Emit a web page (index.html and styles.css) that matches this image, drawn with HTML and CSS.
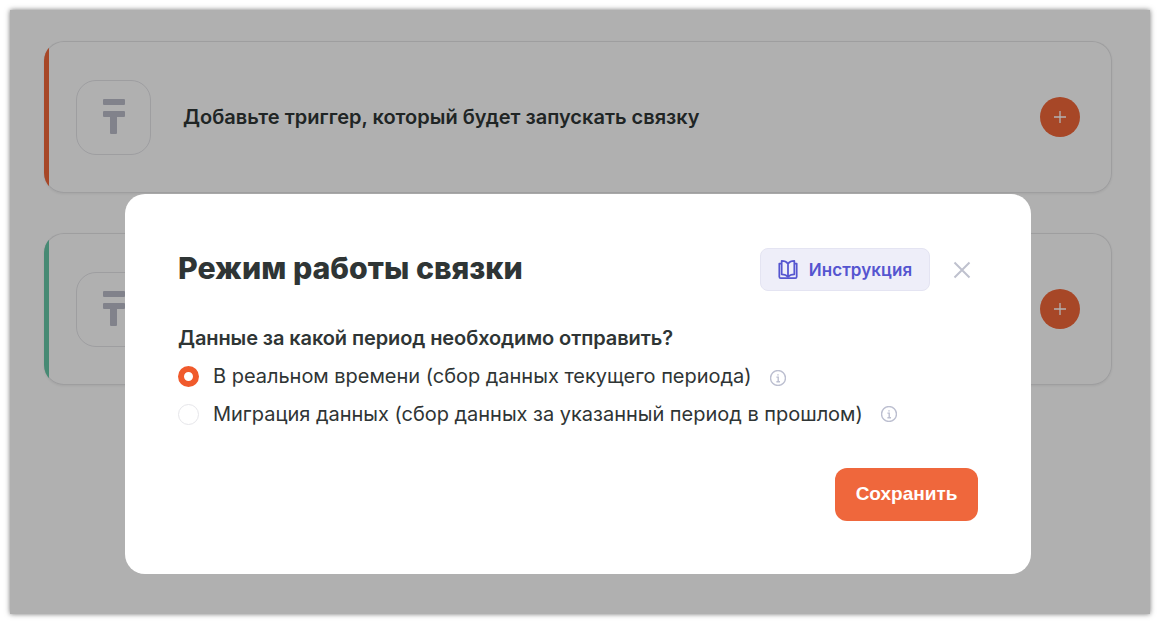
FILE: index.html
```html
<!DOCTYPE html>
<html lang="ru">
<head>
<meta charset="utf-8">
<title>Режим работы связки</title>
<link rel="stylesheet" href="styles.css">
</head>
<body>
<div class="screen">
  <div class="card card-orange">
    <div class="tile"><svg class="tenge" viewBox="0 0 22 35"><rect x="0" y="0" width="22" height="6" rx="1"/><rect x="0" y="12" width="22" height="6" rx="1"/><rect x="7" y="12" width="7" height="23" rx="1"/></svg></div>
    <div class="card-text">Добавьте триггер, который будет запускать связку</div>
    <div class="add"><svg viewBox="0 0 14 14"><path d="M7 1v12M1 7h12"/></svg></div>
  </div>
  <div class="card card-green">
    <div class="tile"><svg class="tenge" viewBox="0 0 22 35"><rect x="0" y="0" width="22" height="6" rx="1"/><rect x="0" y="12" width="22" height="6" rx="1"/><rect x="7" y="12" width="7" height="23" rx="1"/></svg></div>
    <div class="card-text"></div>
    <div class="add"><svg viewBox="0 0 14 14"><path d="M7 1v12M1 7h12"/></svg></div>
  </div>
  <div class="overlay"></div>
  <div class="modal">
    <div class="modal-head">
      <h1 class="title">Режим работы связки</h1>
      <button class="guide">
        <svg class="book" viewBox="1.800 2 16.400 16.200"><path d="M10 5.200C8.800 3.600 7 2.800 4.600 2.800v11.400c2.400 0 4.200.7 5.400 2.200 1.200-1.500 3-2.200 5.400-2.200V2.800C13 2.800 11.200 3.600 10 5.200zM10 5.200v11.200"/><path d="M4.600 5H2.600v11.200c0 .7.500 1.200 1.200 1.200h12.400c.7 0 1.200-.5 1.200-1.200V5h-2"/></svg>
        Инструкция
      </button>
      <button class="close" aria-label="Закрыть"><svg viewBox="0 0 18 18"><path d="M1.500 1.500l15 15M16.500 1.500l-15 15"/></svg></button>
    </div>
    <div class="question">Данные за какой период необходимо отправить?</div>
    <div class="options">
      <label class="option"><span class="radio radio-on"></span><span>В реальном времени (сбор данных текущего периода)</span><svg class="info info-low" viewBox="0.500 0.500 15 15"><circle cx="8" cy="8" r="7"/><path d="M6.500 7.200H8.200V11.500M6.500 11.500h3.400M8 4.400v1.200"/></svg></label>
      <label class="option"><span class="radio"></span><span>Миграция данных (сбор данных за указанный период в прошлом)</span><svg class="info" viewBox="0.500 0.500 15 15"><circle cx="8" cy="8" r="7"/><path d="M6.500 7.200H8.200V11.500M6.500 11.500h3.400M8 4.400v1.200"/></svg></label>
    </div>
    <div class="actions"><button class="save">Сохранить</button></div>
  </div>
</div>
</body>
</html>
```
FILE: styles.css
```css
* { box-sizing: border-box; }
html, body { margin: 0; height: 100%; }
body { background: #fff; padding: 10px; font-family: Inter, "Liberation Sans", sans-serif; overflow: hidden; }
.screen {
  position: relative; width: 1140px; height: 604px; background: #fdfdfd;
  padding: 31px 38px 0 34px; display: flex; flex-direction: column; gap: 40px;
  box-shadow: 0 0 5px rgba(0,0,0,.55);
}
.card {
  height: 152px; border-radius: 20px; padding: 0 32px;
  display: flex; align-items: center; overflow: hidden; position: relative;
  box-shadow: inset 0 0 0 1px #e2e2e4, 0 1px 3px rgba(0,0,0,.08);
}
.card::before { content: ""; position: absolute; left: 0; top: 0; bottom: 0; width: 5px; }
.card-orange::before { background: #f06639; }
.card-green::before { background: #66c6a6; }
.tile {
  width: 75px; height: 75px; border: 1px solid #e2e2e6; border-radius: 20px; flex: none;
  display: flex; align-items: center; justify-content: center;
}
.tenge { width: 22px; height: 35px; margin: 0 0 2px 1px; fill: #b9bbc8; }
.card-text { flex: 1; margin-left: 32px; font-size: 20px; font-weight: 600; color: #2f3535; }
.add { width: 40px; height: 40px; border-radius: 50%; background: #f06639; display: flex; align-items: center; justify-content: center; flex: none; }
.add svg { width: 14px; height: 14px; fill: none; stroke: #fff; stroke-width: 1.300; }
.overlay { position: absolute; inset: 0; background: rgba(0,0,0,.3); }
.modal {
  position: absolute; left: 115px; top: 184px; width: 906px; height: 380px;
  background: #fff; border-radius: 20px; padding: 54px 53px 53px;
  display: flex; flex-direction: column;
}
.modal-head { display: flex; align-items: center; height: 43px; }
.title { margin: 0 0 3px; flex: 1; font-size: 30.300px; line-height: 40px; font-weight: 800; color: #2f3535; }
.guide {
  width: 170px; height: 43px; border: 1px solid #e4e4f2; border-radius: 8px; background: #eeeef9;
  color: #5555d0; font: 600 17px Inter, "Liberation Sans", sans-serif; letter-spacing: .1px;
  display: flex; align-items: center; justify-content: center; gap: 11px; padding: 0;
}
.book { width: 20px; height: 19px; fill: none; stroke: #5555d0; stroke-width: 1.500; stroke-linejoin: round; }
.close { width: 18px; height: 18px; margin-left: 23px; margin-right: 7px; padding: 0; border: 0; background: none; display: flex; }
.close svg { width: 18px; height: 18px; fill: none; stroke: #bfc1ce; stroke-width: 2; }
.question { margin-top: 33px; font-size: 20px; line-height: 28px; font-weight: 600; letter-spacing: -.1px; color: #2f3535; }
.options { margin-top: 11px; display: flex; flex-direction: column; gap: 12px; }
.option { display: flex; align-items: center; height: 26px; font-size: 20px; letter-spacing: -.02px; color: #2f3535; }
.radio { width: 21px; height: 21px; border-radius: 50%; border: 1px solid #e6e6ea; margin-right: 14px; flex: none; }
.radio-on { border: 6px solid #f05a2c; background: #fff; }
.info { width: 16px; height: 16px; margin: 0 0 0 18px; fill: none; stroke: #bcbfd0; stroke-width: 1.300; flex: none; }
.info-low { margin-top: 3px; }
.actions { margin-top: auto; display: flex; justify-content: flex-end; }
.save {
  width: 143px; height: 53px; border: 0; border-radius: 12px; background: #ef673c; color: #fff;
  font: 700 19px "Liberation Sans", Arial, sans-serif; padding: 0 0 2px;
}
```
